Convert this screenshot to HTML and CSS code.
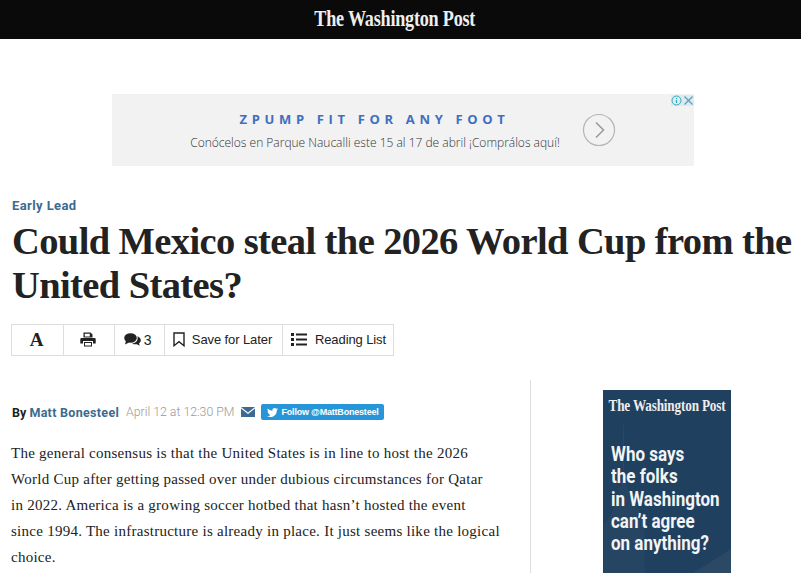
FILE: index.html
```html
<!DOCTYPE html>
<html lang="en">
<head>
<meta charset="utf-8">
<title>Could Mexico steal the 2026 World Cup from the United States?</title>
<link rel="stylesheet" href="styles.css">
</head>
<body>
<header class="masthead"><span class="logo">The Washington Post</span></header>
<div class="ad-wrap">
  <div class="ad">
    <div class="ad-copy">
      <div class="ad-title">ZPUMP FIT FOR ANY FOOT</div>
      <div class="ad-sub">Conócelos en Parque Naucalli este 15 al 17 de abril ¡Comprálos aquí!</div>
    </div>
    <div class="ad-arrow">
      <svg width="34" height="34" viewBox="0 0 34 34"><circle cx="17" cy="17" r="15.5" fill="none" stroke="#b5b5b5" stroke-width="1.2"/><path d="M14 9.5l7.500 7.500-7.500 7.500" fill="none" stroke="#999" stroke-width="1.500"/></svg>
    </div>
    <div class="ad-choices">
      <svg width="11" height="11" viewBox="0 0 11 11"><circle cx="5.5" cy="5.5" r="4.5" fill="none" stroke="#3aa6bd" stroke-width="1"/><path d="M5.500 3v1M5.500 5v3" stroke="#3aa6bd" stroke-width="1.200"/></svg>
      <svg width="11" height="11" viewBox="0 0 11 11"><path d="M1.500 1.500l8 8M9.500 1.500l-8 8" stroke="#5a9fb5" stroke-width="1.200"/></svg>
    </div>
  </div>
</div>
<main class="article">
  <a class="kicker">Early Lead</a>
  <h1 class="headline">Could Mexico steal the 2026 World Cup from the United States?</h1>
  <div class="toolbar">
    <div class="tool tool-font"><span class="font-a">A</span></div>
    <div class="tool tool-print">
      <svg width="16" height="15" viewBox="0 0 16 15"><path fill="#222" d="M3.500 0.500h7l2 2v3h-9z M1.500 6h13a1.200 1.200 0 0 1 1.200 1.200v4.300h-2.700v-2.500h-10v2.500h-2.700v-4.300a1.200 1.200 0 0 1 1.200-1.200z M4 10h8v4.500h-8z"/><path fill="#fff" d="M4.800 1.800h5v2.700h-5z M5 11h6v2.500h-6z"/></svg>
    </div>
    <div class="tool tool-comments">
      <svg width="17" height="13" viewBox="0 0 17 13"><ellipse cx="6.500" cy="5" rx="6.300" ry="4.800" fill="#222"/><path fill="#222" d="M2 7.500l-1 4 4-2z"/><path fill="#222" d="M13.500 3.200c2 .8 3.300 2.300 3.300 4 0 1.300-.7 2.400-1.800 3.200l.8 2.300-3-1.500c-1.800.3-3.500 0-4.800-.8 3.500 0 6.500-2.800 5.500-7.200z"/></svg>
      <span class="count">3</span>
    </div>
    <div class="tool tool-save">
      <svg width="12" height="15" viewBox="0 0 12 15"><path d="M1 1h10v12.700l-5-4-5 4z" fill="none" stroke="#222" stroke-width="1.400"/></svg>
      <span>Save for Later</span>
    </div>
    <div class="tool tool-list">
      <svg width="16" height="13" viewBox="0 0 16 13"><path fill="#222" d="M0 0h3v3h-3z M5 0.500h11v2h-11z M0 5h3v3h-3z M5 5.500h11v2h-11z M0 10h3v3h-3z M5 10.500h11v2h-11z"/></svg>
      <span>Reading List</span>
    </div>
  </div>
  <div class="columns">
    <div class="story">
      <div class="byline">
        <span class="by">By <a class="author">Matt Bonesteel</a></span>
        <span class="date">April 12 at 12:30 PM</span>
        <svg class="mail" width="14" height="10" viewBox="0 0 14 10"><path fill="#3b6a94" d="M0 0h14l-7 5.500z M0 1.500l7 5.500 7-5.500v8.500h-14z"/></svg>
        <span class="follow">
          <svg width="11" height="9" viewBox="0 0 24 20"><path fill="#fff" d="M24 2.400c-.9.400-1.800.7-2.800.8 1-.6 1.800-1.600 2.200-2.700-1 .6-2 1-3.100 1.200C19.300.7 18 0 16.600 0c-2.700 0-4.900 2.200-4.900 4.900 0 .4 0 .8.100 1.100C7.700 5.800 4.100 3.900 1.700.9 1.200 1.600 1 2.500 1 3.400c0 1.700.9 3.200 2.200 4.100-.8 0-1.600-.2-2.200-.6v.1c0 2.400 1.700 4.400 3.900 4.800-.4.100-.8.200-1.300.2-.3 0-.6 0-.9-.1.600 2 2.400 3.400 4.600 3.400C5.600 17.100 3.500 17.900 1.200 17.900c-.4 0-.8 0-1.200-.1C2.200 19.200 4.800 20 7.500 20c9.100 0 14-7.500 14-14v-.6c1-.7 1.800-1.600 2.500-3z"/></svg>
          Follow @MattBonesteel
        </span>
      </div>
      <p class="body">The general consensus is that the United States is in line to host the 2026<br>World Cup after getting passed over under dubious circumstances for Qatar<br>in 2022. America is a growing soccer hotbed that hasn’t hosted the event<br>since 1994. The infrastructure is already in place. It just seems like the logical<br>choice.</p>
    </div>
    <aside class="rail">
      <div class="promo">
        <svg class="promo-art" width="128" height="183" viewBox="0 0 128 183"><path d="M20 35h1v50h-1z" fill="#2a4764"/><path d="M20.700 80c2 14 4 24 12 34 5 7 9 18 9 28v41h-41v-50c8-3 16-30 20-53z" fill="#264562"/><path d="M90 183l38-24v24z" fill="#2b4865"/></svg>
        <div class="promo-logo"><span>The Washington Post</span></div>
        <div class="promo-text">Who says<br>the folks<br>in Washington<br>can’t agree<br>on anything?</div>
      </div>
    </aside>
  </div>
</main>
</body>
</html>
```
FILE: styles.css
```css
* { box-sizing: border-box; }
html, body { margin: 0; height: 573px; overflow: hidden; background: #fff; }
body { font-family: "Liberation Sans", Arial, sans-serif; color: #222; }

.masthead { height: 39px; background: #0a0a0a; display: flex; align-items: center; justify-content: center; }
.logo { display: inline-block; font-family: "Liberation Serif", serif; font-weight: 700; font-size: 23px; color: #eee; letter-spacing: -0.300px; white-space: nowrap; transform: translate(-6px, -1px) scaleX(.79); }

.ad-wrap { padding: 55px 107px 0 112px; }
.ad { position: relative; height: 72px; background: #f2f2f2; display: flex; }
.ad-copy { width: 467px; text-align: center; padding-top: 16px; }
.ad-title { font-family: "Open Sans", sans-serif; font-weight: 700; font-size: 13px; letter-spacing: 4.650px; color: #3f6fc0; line-height: 18px; margin-left: 58px; }
.ad-sub { font-family: "Open Sans", sans-serif; font-weight: 300; font-size: 12px; line-height: 18px; margin-top: 6px; color: #333; margin-left: 59px; white-space: nowrap; }
.ad-arrow { margin: 19px 0 0 3px; }
.ad-choices { position: absolute; top: 1px; right: 0; display: flex; gap: 1px; background: #dcebef; }
.ad-choices svg { display: block; }

.article { padding: 31px 0 0 12px; }
.kicker { display: block; font-family: "Roboto", sans-serif; font-weight: 700; font-size: 13px; line-height: 18px; color: #3d6a8f; letter-spacing: .4px; }
.headline { margin: 4px 0 0; font-family: "Liberation Serif", serif; font-weight: 700; font-size: 38.500px; line-height: 44px; color: #222; width: 785px; letter-spacing: -0.600px; }

.toolbar { display: inline-flex; height: 32px; margin: 17px 0 0 -1px; border: 1px solid #ddd; vertical-align: top; }
.tool { display: flex; align-items: center; justify-content: center; border-left: 1px solid #ddd; font-size: 13px; color: #222; height: 100%; padding-bottom: 1px; letter-spacing: -0.100px; }
.tool:first-child { border-left: 0; }
.tool-font { width: 51px; padding-right: 2px; }
.tool-print { width: 51px; padding-right: 2px; }
.tool-comments { width: 50px; gap: 3px; padding-right: 4px; }
.count { font-size: 14px; }
.tool-save { width: 118px; gap: 7px; padding-right: 2px; }
.tool-list { width: 111px; gap: 8px; padding-left: 1px; }
.font-a { font-family: "Liberation Serif", serif; font-weight: 700; font-size: 19px; }

.columns { display: flex; margin-top: 24px; }
.story { width: 519px; padding-top: 23px; border-right: 1px solid #ddd; height: 193px; }
.byline { display: flex; align-items: center; height: 18px; font-size: 12px; white-space: nowrap; }
.by { font-family: "Roboto", sans-serif; font-weight: 700; font-size: 12.500px; color: #222; }
.author { color: #3d6a8f; letter-spacing: .3px; }
.date { font-family: "Roboto", sans-serif; font-weight: 300; color: #999; font-size: 12.300px; margin-left: 7px; }
.mail { margin-left: 7px; }
.follow { display: inline-flex; align-items: center; gap: 3px; margin-left: 6px; height: 16px; padding: 0 5px 0 6px; background: #2696d8; color: #fff; font-size: 9px; font-weight: 700; border-radius: 2px; letter-spacing: -0.200px; }

.body { margin: 19px 0 0 -1px; font-family: "Liberation Serif", serif; font-size: 15px; line-height: 26px; color: #222; letter-spacing: 0.260px; white-space: nowrap; }

.rail { flex: 1; padding: 10px 0 0 72px; }
.promo { position: relative; width: 128px; height: 183px; background: #20405f; color: #fff; padding: 6px 0 0; overflow: hidden; }
.promo-art { position: absolute; left: 0; top: 0; }
.promo-logo { position: relative; font-family: "Liberation Serif", serif; font-weight: 700; font-size: 16.500px; line-height: 19px; text-align: center; color: #eee; white-space: nowrap; transform: scaleX(.8); letter-spacing: -0.200px; margin: 0 -20px; }
.promo-text { position: relative; margin: 28px 0 0 8px; font-family: "Roboto", sans-serif; font-weight: 700; font-size: 20px; line-height: 22.300px; color: #f2f4f6; white-space: nowrap; transform: scaleX(.85); transform-origin: left; }
```
